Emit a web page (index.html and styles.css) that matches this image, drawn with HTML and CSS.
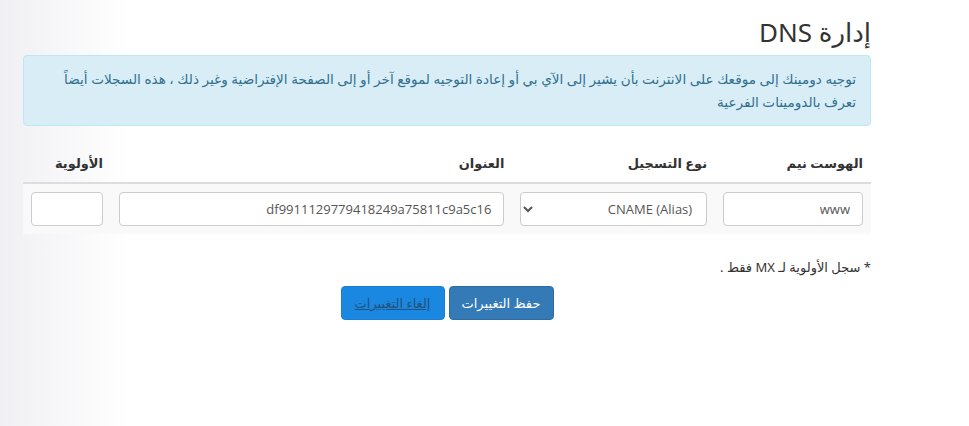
FILE: index.html
```html
<!DOCTYPE html>
<html lang="ar" dir="rtl">
<head>
  <meta charset="UTF-8" />
  <meta name="viewport" content="width=device-width, initial-scale=1" />
  <title>إدارة DNS</title>
  <link rel="stylesheet" href="styles.css">
</head>
<body>
  <div class="container">
    <h1>إدارة DNS</h1>

    <div class="alert-info">
      توجيه دومينك إلى موقعك على الانترنت بأن يشير إلى الآي بي أو إعادة التوجيه لموقع آخر أو إلى الصفحة الإفتراضية وغير ذلك ، هذه السجلات أيضاً تعرف بالدومينات الفرعية
    </div>

    <table class="dns-table">
      <thead>
        <tr>
          <th class="col-host">الهوست نيم</th>
          <th class="col-type">نوع التسجيل</th>
          <th class="col-addr">العنوان</th>
          <th class="col-prio">الأولوية</th>
        </tr>
      </thead>
      <tbody>
        <tr>
          <td><input type="text" class="field" value="www" /></td>
          <td>
            <select class="field">
              <option>CNAME (Alias)</option>
            </select>
          </td>
          <td><input type="text" class="field" value="df9911129779418249a75811c9a5c16" /></td>
          <td><input type="text" class="field" value="" /></td>
        </tr>
      </tbody>
    </table>

    <p class="note">* سجل الأولوية لـ MX فقط .</p>

    <div class="actions">
      <button class="btn btn-save">حفظ التغييرات</button>
      <button class="btn btn-cancel">إلغاء التغييرات</button>
    </div>
  </div>
</body>
</html>
```

FILE: styles.css
```css
html {
  height: 100%;
}
body {
  font-family: "Noto Sans", "DejaVu Sans", sans-serif;
  background: linear-gradient(to right, #f0f0f4 0px, #f7f7f9 60px, #ffffff 130px);
  color: #333;
  margin: 0;
  padding: 0;
  min-height: 100%;
}
.container {
  width: 848px;
  margin-right: 98px;
  padding-top: 16px;
}
h1 {
  font-size: 26px;
  font-weight: normal;
  color: #333;
  margin: 0 0 7px;
  line-height: 32px;
}
.alert-info {
  background: #d9edf7;
  border: 1px solid #bce8f1;
  color: #31708f;
  border-radius: 4px;
  padding: 11px 14px 12px;
  font-size: 13.6px;
  line-height: 23px;
}
.dns-table {
  width: 100%;
  border-collapse: collapse;
  margin-top: 20px;
}
.dns-table th {
  text-align: right;
  font-size: 13px;
  font-weight: bold;
  color: #333;
  padding: 8px 8px 10px;
  border-bottom: 2px solid #ddd;
}
.dns-table td {
  background: #f9f9f9;
  padding: 8px;
}
.col-host { width: 140px; }
.col-type { width: 187px; }
.col-addr { width: 386px; }
.col-prio { width: 72px; }
.field {
  display: block;
  width: 100%;
  height: 34px;
  box-sizing: border-box;
  border: 1px solid #ccc;
  border-radius: 4px;
  background: #fff;
  padding: 6px 12px;
  font-family: "Open Sans", "Noto Sans", sans-serif;
  font-size: 13px;
  color: #555;
}
select.field {
  padding: 6px 10px;
}
.note {
  font-size: 13px;
  color: #333;
  margin: 24px 0 10px;
}
.actions {
  display: flex;
  justify-content: center;
  gap: 4px;
}
.btn {
  height: 34px;
  padding: 0 12px;
  border-radius: 4px;
  font-family: "Noto Sans", "DejaVu Sans", sans-serif;
  font-size: 13px;
  white-space: nowrap;
  cursor: pointer;
}
.btn-save {
  background: #337ab7;
  border: 1px solid #2e6da4;
  color: #fff;
  min-width: 105px;
}
.btn-cancel {
  background: #1a87e0;
  border: 1px solid #1a7fd4;
  color: #23527c;
  text-decoration: underline;
  min-width: 104px;
}
```
